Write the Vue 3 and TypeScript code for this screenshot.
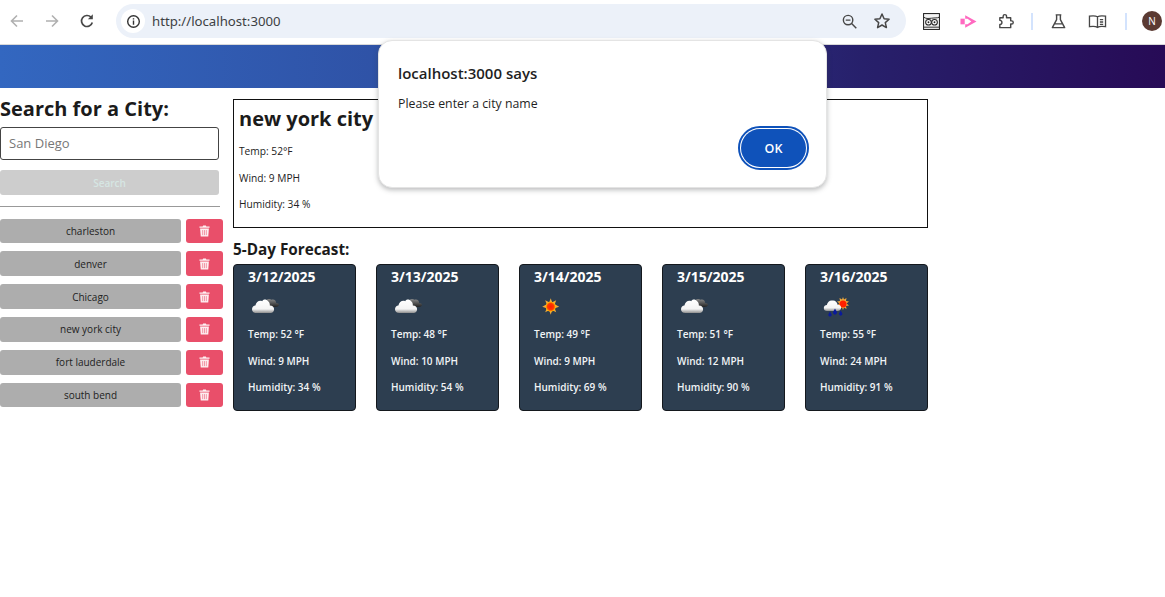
<script setup lang="ts">
type Kind = 'cloud' | 'sun' | 'rain'
interface Day { date: string; kind: Kind; temp: number; wind: number; hum: number }
const cities: string[] = ['charleston', 'denver', 'Chicago', 'new york city', 'fort lauderdale', 'south bend']
const days: Day[] = [
  { date: '3/12/2025', kind: 'cloud', temp: 52, wind: 9, hum: 34 },
  { date: '3/13/2025', kind: 'cloud', temp: 48, wind: 10, hum: 54 },
  { date: '3/14/2025', kind: 'sun', temp: 49, wind: 9, hum: 69 },
  { date: '3/15/2025', kind: 'cloud', temp: 51, wind: 12, hum: 90 },
  { date: '3/16/2025', kind: 'rain', temp: 55, wind: 24, hum: 91 },
]
</script>

<template>
  <div class="page">
    <div class="toolbar">
      <div class="nav">
        <svg class="ic" viewBox="0 0 18 18"><path d="M15 9H4M9 3.5 3.5 9 9 14.500" fill="none" stroke="#b0b0b0" stroke-width="1.6"/></svg>
        <svg class="ic" viewBox="0 0 18 18"><path d="M3 9h11M9 3.500 14.500 9 9 14.500" fill="none" stroke="#b0b0b0" stroke-width="1.600"/></svg>
        <svg class="ic" viewBox="0 0 18 18"><path d="M14.300 10.500A5.500 5.500 0 1 1 13 5.200" fill="none" stroke="#474747" stroke-width="1.700"/><path d="M14.800 2.300v4.900H9.900z" fill="#474747"/></svg>
      </div>
      <div class="omnibox">
        <span class="info"><svg viewBox="0 0 16 16" width="15" height="15"><circle cx="8" cy="8" r="6.200" fill="none" stroke="#333" stroke-width="1.500"/><path d="M8 7v4.500M8 4.400v1.500" stroke="#333" stroke-width="1.500"/></svg></span>
        <span class="url">http://localhost:3000</span>
        <svg class="zoom" viewBox="0 0 18 18"><circle cx="7.500" cy="7.500" r="5" fill="none" stroke="#474747" stroke-width="1.500"/><path d="M5 7.500h5M11.200 11.200l5 5" stroke="#474747" stroke-width="1.500"/></svg>
        <svg class="star" viewBox="0 0 18 18"><path d="m9 2 2.100 4.700 5 .5-3.800 3.400 1.100 5L9 13l-4.400 2.600 1.100-5L1.900 7.200l5-.5z" fill="none" stroke="#474747" stroke-width="1.500" stroke-linejoin="round"/></svg>
      </div>
      <div class="exts">
        <svg class="ext owl" viewBox="0 0 18 18"><rect x=".6" y=".6" width="16.800" height="16.800" fill="#f4f4f4" stroke="#222" stroke-width="1.100"/><path d="M1 4.500c2 1.500 4 1.500 8 1s6 0 8-1M1 15h16" fill="none" stroke="#222"/><circle cx="5.800" cy="9.800" r="3" fill="#fff" stroke="#222" stroke-width="1.100"/><circle cx="12.200" cy="9.800" r="3" fill="#fff" stroke="#222" stroke-width="1.100"/><circle cx="5.800" cy="9.800" r="1" fill="#222"/><circle cx="12.200" cy="9.800" r="1" fill="#222"/></svg>
        <svg class="ext" viewBox="0 0 18 18"><rect x=".5" y="6" width="4.500" height="6" fill="#ff69c0"/><path d="M5.500 2.500 17.500 9l-12 6.500v-3.500h2.500L12 9 8 6H5.500z" fill="#ff69c0"/></svg>
        <svg class="ext puzzle" viewBox="0 0 18 18"><path d="M3 5h3.500V3.500a1.800 1.800 0 0 1 3.600 0V5H14.500v3.300h1a1.700 1.700 0 0 1 0 3.400h-1V15.500H3v-3.300a2.200 2.200 0 0 0 0-4.400z" fill="none" stroke="#474747" stroke-width="1.500" stroke-linejoin="round"/></svg>
        <span class="sep"></span>
        <svg class="ext flask" viewBox="0 0 18 18"><path d="M6 2h6M7 2v5L2.500 15.500h13L11 7V2M5 11.500h8" fill="none" stroke="#474747" stroke-width="1.500" stroke-linejoin="round"/></svg>
        <svg class="ext wide" viewBox="0 0 20 18"><path d="M10 4C8 2.800 4.500 2.800 1.500 3.300v11.200c3-.5 6.500-.5 8.500.7 2-1.200 5.500-1.200 8.500-.7V3.300C15.500 2.800 12 2.800 10 4zM10 4v11M12.500 7h3.500M12.500 9.500h3.500M12.500 12h3.500" fill="none" stroke="#474747" stroke-width="1.400"/></svg>
        <span class="sep last"></span>
        <span class="avatar">N</span>
      </div>
    </div>

    <header class="banner"></header>

    <main class="content">
      <aside class="side">
        <h3 class="side-title">Search for a City:</h3>
        <input class="city-input" placeholder="San Diego" />
        <button class="search">Search</button>
        <hr class="rule" />
        <ul class="history">
          <li v-for="c in cities" :key="c" class="city-row">
            <button class="city">{{ c }}</button>
            <button class="del" :aria-label="'Delete ' + c">
              <svg viewBox="0 0 12 13" width="11" height="12"><path d="M4 1.500 4.500.5h3l.5 1h3.500v1.500H.5V1.500z" fill="#fff" opacity=".92"/><path d="M1.200 3.800h9.600l-.7 8.700H1.900z" fill="#fff" opacity=".9"/><path d="M4 5.500v5.500M6 5.500v5.500M8 5.500v5.500" stroke="#e94f6a" stroke-width=".6"/></svg>
            </button>
          </li>
        </ul>
      </aside>

      <section class="main">
        <div class="today">
          <h2 class="today-title">new york city</h2>
          <p>Temp: 52°F</p>
          <p>Wind: 9 MPH</p>
          <p>Humidity: 34 %</p>
        </div>
        <h4 class="fc-title">5-Day Forecast:</h4>
        <div class="cards">
          <article v-for="d in days" :key="d.date" class="card">
            <h5 class="date">{{ d.date }}</h5>
            <svg class="wx" viewBox="0 0 50 30">
              <defs>
                <linearGradient id="cw" x1="0" y1="0" x2="0" y2="1"><stop offset="0" stop-color="#fff"/><stop offset=".7" stop-color="#f4f4f4"/><stop offset="1" stop-color="#8d8d8d"/></linearGradient>
                <linearGradient id="cd" x1="0" y1="0" x2="0" y2="1"><stop offset="0" stop-color="#8a8a8a"/><stop offset="1" stop-color="#222"/></linearGradient>
                <radialGradient id="sn"><stop offset="0" stop-color="#ff1a00"/><stop offset=".65" stop-color="#ff3a00"/><stop offset="1" stop-color="#ffc800"/></radialGradient>
              </defs>
              <g v-if="d.kind === 'cloud'">
                <path transform="translate(-1.400 3.800) scale(.93 .8)" d="M23 7c1-3 5-4 7-2 3-1 5 1 5 4 2 0 3 1 3 2.500s-2 2.500-4 2.500H24z" fill="url(#cd)"/>
                <path transform="translate(4.450 -4.900) scale(.85 1.08)" d="M8 24c-3 0-5-1.500-5-3.500S5 17 7 17c1-3 4-5 8-4 1-2 5-2 7 0 2 1 2 3 2 4 3 0 5 1.500 5 3.500S27 24 25 24z" fill="url(#cw)"/>
              </g>
              <g v-else-if="d.kind === 'sun'" transform="translate(-5.300 -.8)">
                <path d="M25 7l1.500 4 4-2-1.500 4 4.500 2.500-4.500 1.500 1.500 4-4-2-1.500 4.500-1.500-4.500-4 2 1.500-4-4.500-1.500 4.500-2.500-1.500-4 4 2z" fill="#f2a93b"/>
                <circle cx="25" cy="15.500" r="5" fill="url(#sn)"/>
              </g>
              <g v-else>
                <g transform="translate(-3 1)">
                  <path d="M29 4l1 2.500 2.500-1.500-.5 3 3 .5-2.500 2 2.500 2-3 .5.500 3-2.500-1.500-1 2.500-1-2.500-2.500 1.500.5-3-3-.5 2.500-2-2.500-2 3-.5-.5-3 2.500 1.500z" fill="#f2a93b"/>
                  <circle cx="29" cy="11" r="3.500" fill="#ff2000"/>
                </g>
                <path d="M10 19c-2 0-3.200-1-3.200-3s1.500-3 3-3c.7-3 3-5 5.500-4.500 2.500-.5 4.800 1.200 5.300 4.200 2.500 0 3.500 1.300 3.500 3s-1.500 3.300-3.500 3.300z" fill="url(#cw)"/>
                <path d="M13 19.500l1.500 2.700a1.700 1.700 0 1 1-3 0zM18 16.500l1.700 3a2 2 0 1 1-3.400 0zM23.700 18.500l1.500 2.700a1.700 1.700 0 1 1-3 0z" fill="#0a1a9c"/>
              </g>
            </svg>
            <p>Temp: {{ d.temp }} °F</p>
            <p>Wind: {{ d.wind }} MPH</p>
            <p>Humidity: {{ d.hum }} %</p>
          </article>
        </div>
      </section>
    </main>

    <div class="dialog" role="alertdialog">
      <div class="dlg-title">localhost:3000 says</div>
      <div class="dlg-msg">Please enter a city name</div>
      <div class="dlg-actions"><button class="ok">OK</button></div>
    </div>
  </div>
</template>

<style scoped>
.page {
  position: relative;
  width: 1165px;
  height: 597px;
  overflow: hidden;
  background: #fff;
  font-family: "Open Sans", "Noto Sans", sans-serif;
  color: #212529;
}
.toolbar {
  height: 45px;
  box-sizing: border-box;
  border-bottom: 1px solid #d9d9d9;
  padding: 4px 0 6px 8px;
  display: flex;
  align-items: center;
  background: #fff;
}
.nav { display: flex; gap: 17px; width: 108px; }
.ic { width: 18px; height: 18px; }
.omnibox {
  width: 790px;
  height: 34px;
  box-sizing: border-box;
  padding: 0 15px 0 5px;
  border-radius: 17px;
  background: #ecf1f9;
  display: flex;
  align-items: center;
}
.info {
  width: 24px;
  height: 24px;
  border-radius: 50%;
  background: #fff;
  display: flex;
  align-items: center;
  justify-content: center;
}
.url { margin-left: 7px; font-size: 13.200px; color: #3c4043; flex: 1; font-family: "Noto Sans", sans-serif; }
.zoom { width: 17px; height: 17px; margin-right: 15px; }
.star { width: 18px; height: 18px; }
.exts { display: flex; align-items: center; margin-left: 17px; }
.ext { width: 17px; height: 17px; margin-right: 20px; flex: none; }
.ext.puzzle { margin-right: 17px; }
.ext.wide { width: 21px; margin-right: 17px; }
.sep { width: 2px; height: 17px; background: #d3e3fd; margin-right: 17px; flex: none; }
.sep.last { margin-right: 15px; }
.avatar {
  width: 20px; height: 20px; border-radius: 50%;
  background: #5b3a32; color: #fff; font-size: 10px;
  display: flex; align-items: center; justify-content: center;
}
.banner {
  height: 43px;
  background: linear-gradient(90deg, #3367c0 0%, #2f52a6 33%, #2b2f82 60%, #27206b 74%, #270b56 100%);
}
.content { display: grid; grid-template-columns: 233px 695px; }
.side { padding-top: 9px; display: flex; flex-direction: column; width: 223px; }
.side-title { margin: 0; font-size: 20px; line-height: 24px; font-weight: 700; color: #1b1b1b; }
.city-input {
  box-sizing: border-box; width: 219px; height: 33px; margin-top: 6px;
  border: 1px solid #444; border-radius: 3px; padding: 0 8px 2px;
  font: 13px "Open Sans", sans-serif; outline: none;
}
.city-input::placeholder { color: #777; opacity: 1; }
.search {
  width: 219px; height: 25px; margin-top: 10px; border: 0; border-radius: 3px;
  background: #cdcdcd; color: #d6e6e3; font: 600 10px "Open Sans", sans-serif;
}
.rule { width: 220px; margin: 11px 0 11.600px; border: 0; border-top: 1px solid #999; }
.history { list-style: none; margin: 0; padding: 0; display: flex; flex-direction: column; gap: 8px; }
.city-row { display: flex; gap: 5px; height: 24.800px; }
.city {
  width: 181px; border: 0; border-radius: 3px; background: #adadad; color: #222;
  font: 10px "Open Sans", sans-serif; padding: 0;
}
.del {
  width: 37px; border: 0; border-radius: 3px; background: #e94f6a; padding: 0;
  display: flex; align-items: center; justify-content: center;
}
.main { padding-top: 11px; display: flex; flex-direction: column; }
.today {
  box-sizing: border-box; height: 129px; border: 1px solid #111; padding: 6px 5px;
}
.today-title { margin: 0 0 13px; font-size: 20px; line-height: 26px; font-weight: 700; color: #1b1b1b; }
.today p { margin: 0 0 14px; font-size: 10.200px; line-height: 12.500px; color: #222; }
.fc-title { margin: 11px 0 5px; font-size: 15.300px; line-height: 20px; font-weight: 700; color: #1b1b1b; }
.cards { display: flex; justify-content: space-between; }
.card {
  box-sizing: border-box; width: 123px; height: 147px; padding: 3px 14px;
  background: #2d3e50; border: 1px solid #14181d; border-radius: 4px; color: #fff;
}
.date { margin: 0; font-size: 14px; line-height: 18px; font-weight: 700; }
.wx { display: block; width: 50px; height: 30px; margin: 6px 0 6px -3px; }
.card p { margin: 0 0 13.500px; font-size: 10px; line-height: 13px; font-weight: 600; color: #f1f4f6; }
.dialog {
  position: absolute; left: 378px; top: 40px; width: 449px; height: 148px;
  box-sizing: border-box; background: #fff; border-radius: 14px; padding: 22px 20px 0 19px;
  border: 1px solid #e4e4e4; box-shadow: 0 2px 5px rgba(60, 64, 67, .35);
}
.dlg-title { font-size: 15px; line-height: 20px; font-weight: 600; color: #1f1f1f; }
.dlg-msg { margin-top: 11px; font-size: 12.300px; line-height: 20px; color: #1f1f1f; }
.dlg-actions { display: flex; justify-content: flex-end; margin-top: 15px; }
.ok {
  width: 65px; height: 38px; border: 0; border-radius: 19px; background: #0f52ba; color: #fff;
  font: 600 12.500px "Open Sans", sans-serif; outline: 2px solid #0f52ba; outline-offset: 1px;
}
</style>
<style>
html, body { margin: 0; background: #fff; }
</style>
